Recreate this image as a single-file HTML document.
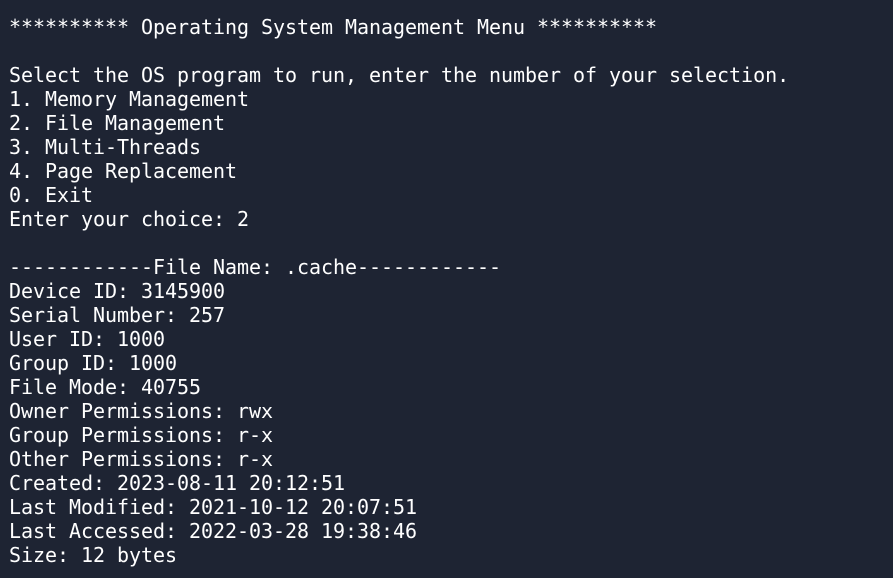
<!DOCTYPE html>
<html><head><style>
html,body{margin:0;padding:0;background:#1e2433;width:893px;height:578px;overflow:hidden}
pre{margin:0;padding:15px 0 0 9px;font-family:"DejaVu Sans Mono","Liberation Mono",monospace;font-size:20px;line-height:24px;letter-spacing:-0.04px;color:#ffffff}
</style></head><body><pre>********** Operating System Management Menu **********

Select the OS program to run, enter the number of your selection.
1. Memory Management
2. File Management
3. Multi-Threads
4. Page Replacement
0. Exit
Enter your choice: 2

------------File Name: .cache------------
Device ID: 3145900
Serial Number: 257
User ID: 1000
Group ID: 1000
File Mode: 40755
Owner Permissions: rwx
Group Permissions: r-x
Other Permissions: r-x
Created: 2023-08-11 20:12:51
Last Modified: 2021-10-12 20:07:51
Last Accessed: 2022-03-28 19:38:46
Size: 12 bytes</pre></body></html>
